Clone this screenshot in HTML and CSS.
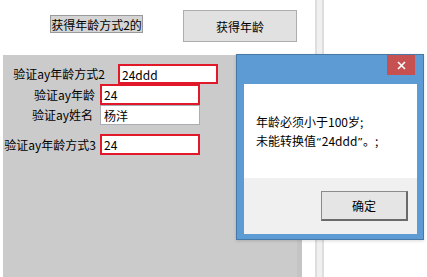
FILE: index.html
```html
<!DOCTYPE html>
<html lang="zh-CN">
<head>
    <meta charset="UTF-8">
    <title>验证年龄</title>
    <link rel="stylesheet" href="styles.css">
</head>
<body>
    <div class="top">
        <span class="tag">获得年龄方式2的</span>
        <button class="btn-get">获得年龄</button>
    </div>

    <div class="panel">
        <div class="row row1">
            <label>验证ay年龄方式2</label>
            <input class="bad" type="text" value="24ddd">
        </div>
        <div class="row row2">
            <label>验证ay年龄</label>
            <input class="bad" type="text" value="24">
        </div>
        <div class="row row3">
            <label>验证ay姓名</label>
            <input type="text" value="杨洋">
        </div>
        <div class="row row4">
            <label>验证ay年龄方式3</label>
            <input class="bad" type="text" value="24">
        </div>
    </div>

    <div class="vline"></div>

    <div class="dialog">
        <div class="titlebar">
            <span class="close">
                <svg width="9" height="9" viewBox="0 0 9 9"><path d="M1 1L8 8M8 1L1 8" stroke="#fff" stroke-width="1.6"/></svg>
            </span>
        </div>
        <div class="client">
            <div class="msg">
                年龄必须小于100岁;<br>
                未能转换值<span class="q">“</span>24ddd<span class="q">”</span>。;
            </div>
            <div class="actions">
                <button class="btn-ok">确定</button>
            </div>
        </div>
    </div>
</body>
</html>
```

FILE: styles.css
```css
body {
    margin: 0;
    background-color: #fff;
    font-family: "Noto Sans CJK SC", "DejaVu Sans", sans-serif;
    font-size: 12px;
    color: #000;
    width: 427px;
    height: 277px;
    overflow: hidden;
    position: relative;
}
.top {
    display: flex;
    align-items: flex-start;
    padding: 10px 0 0 50px;
    box-sizing: border-box;
    height: 55px;
}
.tag {
    margin-top: 5px;
    width: 93px;
    height: 18px;
    line-height: 17px;
    box-sizing: border-box;
    background-color: #d4d4d4;
    border: 1px solid #9a9a9a;
    text-align: center;
    white-space: nowrap;
}
button {
    font-family: inherit;
    font-size: 12px;
    color: #000;
    padding: 0;
}
.btn-get {
    margin-left: 40px;
    width: 114px;
    height: 32px;
    background-color: #e1e1e1;
    border: 1px solid #adadad;
}
.panel {
    margin-left: 3px;
    width: 299px;
    height: 222px;
    box-sizing: border-box;
    padding-top: 9px;
    background-color: #cbcbcb;
    border-right: 5px solid #c4c4c4;
}
.row {
    display: flex;
    align-items: center;
}
.row label {
    text-align: right;
    white-space: nowrap;
    line-height: 16px;
}
input {
    width: 100px;
    box-sizing: border-box;
    font-family: inherit;
    font-size: 12px;
    padding: 0 0 0 3px;
    margin: 0;
    background-color: #fff;
    border: 1px solid #abadb3;
    outline: none;
}
input.bad {
    border: 2px solid #e0182a;
    padding-left: 2px;
}
.row1 input { height: 20px; margin-left: 13px; }
.row1 label { width: 102px; }
.row2 input { height: 21px; margin-left: 5px; }
.row2 label { width: 92px; }
.row3 input { height: 20px; margin-left: 7px; }
.row3 label { width: 90px; }
.row4 { margin-top: 9px; }
.row4 input { height: 21px; margin-left: 4px; }
.row4 label { width: 93px; }

.vline {
    position: absolute;
    left: 315px;
    top: 0;
    width: 9px;
    height: 277px;
    box-sizing: border-box;
    background-color: #f0f0f0;
    border-left: 2px solid #dedede;
    border-right: 2px solid #dedede;
}
.dialog {
    position: absolute;
    left: 236px;
    top: 54px;
    width: 188px;
    height: 186px;
    box-sizing: border-box;
    background-color: #5c9bd3;
    border: 1px solid #4878a6;
    padding: 0 6px 5px 7px;
    display: flex;
    flex-direction: column;
    box-shadow: 0 1px 3px rgba(0, 0, 0, 0.15);
}
.titlebar {
    height: 29px;
    display: flex;
    justify-content: flex-end;
    flex-shrink: 0;
}
.close {
    width: 28px;
    height: 20px;
    margin-right: 2px;
    background-color: #c75050;
    display: flex;
    align-items: center;
    justify-content: center;
}
.client {
    flex: 1;
    display: flex;
    flex-direction: column;
}
.msg {
    height: 94px;
    box-sizing: border-box;
    background-color: #fff;
    padding: 28px 0 0 12px;
    line-height: 19px;
    white-space: nowrap;
}
.msg .q {
    font-family: "DejaVu Sans", sans-serif;
    font-size: 11px;
}
.actions {
    flex: 1;
    background-color: #f0f0f0;
    display: flex;
    justify-content: flex-end;
    align-items: flex-start;
    padding: 13px 9px 0 0;
}
.btn-ok {
    width: 87px;
    height: 30px;
    background-color: #e5e5e5;
    border: 1px solid #8a8a8a;
    border-right: 2px solid #6a6a6a;
    border-bottom: 2px solid #6a6a6a;
}
```
